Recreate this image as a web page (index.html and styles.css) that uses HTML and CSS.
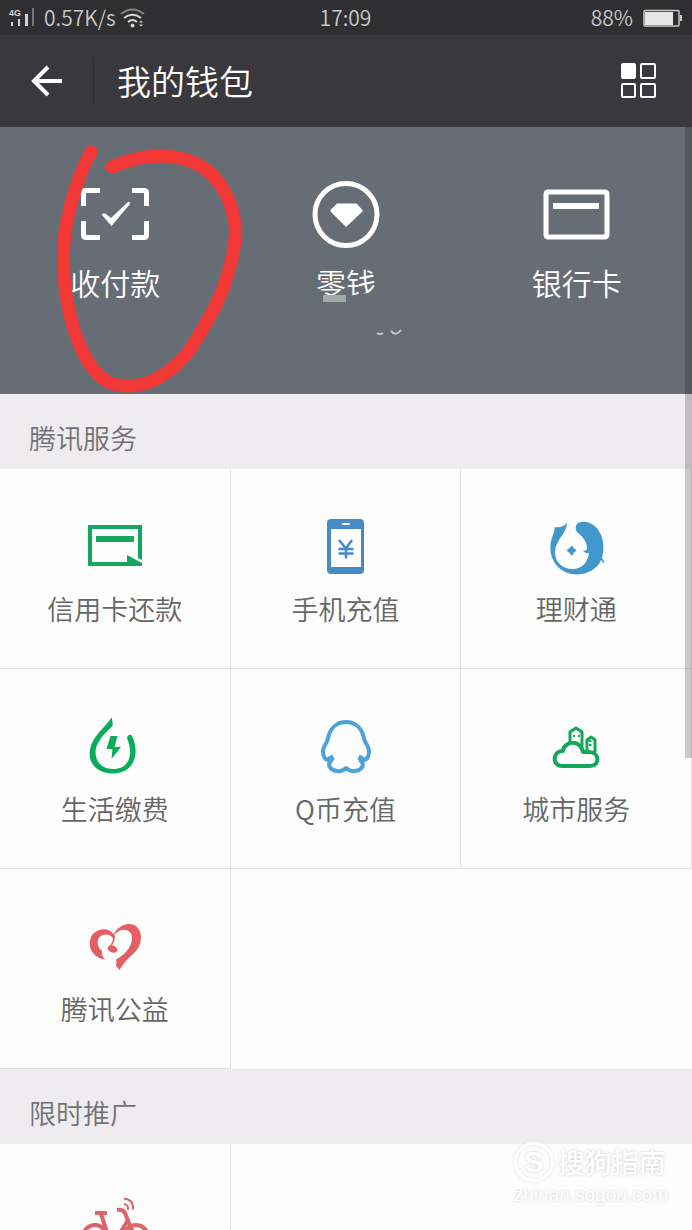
FILE: index.html
```html
<!DOCTYPE html>
<html lang="zh-CN">
<head>
<meta charset="utf-8">
<meta name="viewport" content="width=device-width, initial-scale=1">
<title>我的钱包</title>
<link rel="stylesheet" href="styles.css">
</head>
<body>
<div class="page">
  <div class="status">
    <div class="status-left">
      <svg class="signal" width="28" height="20" viewBox="8 8 28 20" aria-hidden="true">
        <text x="9" y="16" class="signal-text">4G</text>
        <g fill="#d4d4d4"><rect x="11" y="22" width="2" height="4"/><rect x="18" y="19" width="2" height="7"/><rect x="25" y="14" width="3" height="12"/></g>
        <rect x="32" y="8" width="2" height="18" fill="#777"/>
      </svg>
      <span class="speed">0.57K/s</span>
      <svg width="26" height="22" viewBox="119 6 26 22" fill="none" stroke-width="2" aria-hidden="true">
        <path d="M120 13q11.500-9 23 0" stroke="#858585"/>
        <path d="M123 17q8.500-6.500 17 0M127 21q4.500-4 9 0" stroke="#d4d4d4"/>
        <circle cx="131.500" cy="24.500" r="2" fill="#d4d4d4"/>
        <path d="M138 21.500l2-2 2 2zM138 23.500l2 2 2-2z" fill="#d4d4d4"/>
      </svg>
    </div>
    <span class="clock">17:09</span>
    <div class="status-right">
      <span>88%</span>
      <svg width="40" height="18" viewBox="643 8 40 18" aria-hidden="true">
        <rect x="644" y="9.500" width="35" height="15.500" rx="1" fill="none" stroke="#c9c9c9" stroke-width="1.500"/>
        <rect x="645" y="11" width="28" height="13" fill="#e6e6e6"/>
        <path d="M680 14h2v6h-2z" fill="#c9c9c9"/>
      </svg>
    </div>
  </div>

  <header class="header">
    <button class="icon-button back" type="button" aria-label="返回">
      <svg width="32" height="32" viewBox="31 65 32 32" fill="none" stroke="#fff" stroke-width="4"><path d="M62 81H34M48 67L34 81l14 14"/></svg>
    </button>
    <h1 class="title">我的钱包</h1>
    <button class="icon-button menu" type="button" aria-label="更多">
      <svg width="36" height="36" viewBox="620 63 36 36" fill="none" stroke="#fff" stroke-width="2">
        <rect x="622" y="64" width="13" height="14" rx="1" fill="#fff"/><rect x="641" y="64" width="14" height="14" rx="1"/><rect x="622" y="84" width="13" height="13" rx="1"/><rect x="641" y="84" width="14" height="13" rx="1"/>
      </svg>
    </button>
  </header>

  <main>
    <nav class="hero" aria-label="钱包">
      <a class="hero-item" href="#pay">
        <svg width="80" height="80" viewBox="75 174 80 80" fill="none" stroke="#fff" aria-hidden="true">
          <path stroke-width="5" d="M83.500 206v-13q0-2.500 2.500-2.500h14M132 190.500h12q2.500 0 2.500 2.500v13M146.500 221v14q0 2.500-2.500 2.500h-12M100 237.500H86q-2.500 0-2.500-2.500v-14"/>
          <path fill="#fff" stroke="none" d="M102 215q1-3 4-1l5 4 17-16q2-1 2 2l-18.500 22z"/>
        </svg>
        <span>收付款</span>
      </a>
      <a class="hero-item" href="#balance">
        <svg width="80" height="80" viewBox="306 174 80 80" aria-hidden="true">
          <circle cx="346" cy="214.500" r="31" fill="none" stroke="#fff" stroke-width="5"/>
          <path fill="#fff" d="M337 203.500h19.500l6 6.500v1.500l-16.500 15.500-15.500-15.500V210z"/>
        </svg>
        <span>零钱</span>
        <svg class="residue" width="92" height="48" viewBox="315 290 92 48" aria-hidden="true">
          <rect x="323" y="295" width="23" height="7" fill="#a3a9ad"/>
          <path d="M347 296l27-4 3-1v10h-30z" fill="#676d75"/>
          <path d="M377 333q3 2 6 0M391 331q5 6 10-1" fill="none" stroke="#c4c8cc" stroke-width="2"/>
        </svg>
      </a>
      <a class="hero-item" href="#cards">
        <svg width="80" height="80" viewBox="537 174 80 80" aria-hidden="true">
          <rect x="546" y="192" width="61" height="45" rx="2" fill="none" stroke="#fff" stroke-width="5"/>
          <path fill="#fff" d="M553 203h46v6h-46z"/>
        </svg>
        <span>银行卡</span>
      </a>
    </nav>

    <h2 class="section-title">腾讯服务</h2>
    <nav class="grid" aria-label="腾讯服务">
      <a class="cell" href="#credit">
        <svg width="72" height="64" viewBox="79 515 72 64" aria-hidden="true">
          <path fill="#15a75d" d="M88 525h54v35l-4-2v-29H92v33h35v-7l15 8v3H88z"/>
          <path fill="#15a75d" d="M96 536h38v6H96z"/>
        </svg>
        <span>信用卡还款</span>
      </a>
      <a class="cell" href="#mobile">
        <svg width="72" height="64" viewBox="309 515 72 64" aria-hidden="true">
          <rect x="327" y="519" width="37" height="55" rx="4" fill="#458cc6"/>
          <path fill="#fdfdfd" d="M331 529h30v38h-30z"/><rect x="342" y="523" width="8" height="2" rx="1" fill="#fff"/>
          <path d="M339 540l7 8.500 6-8.500M338.500 549h15M338.500 553.500h15M346 548v10.500" fill="none" stroke="#458cc6" stroke-width="2.500"/>
        </svg>
        <span>手机充值</span>
      </a>
      <a class="cell" href="#wealth">
        <svg width="72" height="64" viewBox="540 515 72 64" fill="#4098cf" aria-hidden="true">
          <path d="M567 522.500C564 527 560 527 554.500 527.500Q555 531 553 535C548 546 550 560 559 568C569 577 586 576 595 568C599 565 600 562 601 560L604.500 564Q604 560 602 558C604 550 604 542 601 535C597 526 590 521 581 522C575 523 574 529 578 533C584 538 587 542 587 549Q585 552 583 550Q585 554 589 553C588 562 582 569 573 569C562 569 555 562 555 552C555 540 567 534 567 522.500Z"/>
          <path d="M572 545.500l1.500 2.500 3 2.500-3 2.500-1.500 3-2.500-3-3-2.500 3-2.500z"/>
        </svg>
        <span>理财通</span>
      </a>
      <a class="cell" href="#utilities">
        <svg width="72" height="64" viewBox="79 715 72 64" aria-hidden="true">
          <path fill="#08ac5b" d="M111.500 717.500Q113 721 112.500 726C107 731 102 736 98 743C92 754 97 769 113 769C129 769 134 755 127 738Q128 734 131.500 735C140 751 136 773 113 773.500C91 773 85 756 93 741C98 732 106 726 111.500 717.500Z"/>
          <path fill="#08ac5b" d="M110.500 736h7l-3 11h6.500l-9.500 12 1-10h-6z"/>
        </svg>
        <span>生活缴费</span>
      </a>
      <a class="cell" href="#qcoin">
        <svg width="72" height="64" viewBox="309 715 72 64" fill="none" stroke="#4ca3d8" stroke-width="4" stroke-linejoin="round" aria-hidden="true">
          <path d="M333 757q-3 0-5 3-5-1-5-9c0-5 5-9 5-13 2-9 8-16 18-16s16 7 18 16c0 4 5 8 5 13q0 8-5 9-2-3-5-3"/>
          <path d="M333 757l-2 4c-4 4-1 9 6 10q5 1 9-3 5 4 9 3c7-1 10-6 6-10l-2-4"/>
        </svg>
        <span>Q币充值</span>
      </a>
      <a class="cell" href="#city">
        <svg width="72" height="64" viewBox="540 715 72 64" fill="none" stroke="#14a75c" stroke-width="4" stroke-linejoin="round" aria-hidden="true">
          <path d="M562 766c-10 0-10-15 1-15 1-10 17-12 20 1h6c11 0 11 14 1 14z"/>
          <path d="M570 744v-12l6-4 6 4v16M587 750v-10l4-3 4 3v12" stroke-width="3"/>
          <path d="M573 736h2m3 0h2M589 741h2.500M589 745h2.500" stroke-width="2"/>
        </svg>
        <span>城市服务</span>
      </a>
      <a class="cell" href="#charity">
        <svg width="72" height="64" viewBox="79 915 72 64" fill="#e45e64" aria-hidden="true">
          <path d="M115 936C111 928 100 927 94 933C86 941 89 957 105 959.500Q101 955 102 951C96 946 96 937 103 935Q109 933 113 938C113 942 111 944 109 946.500H111C114 943 115 940 115 936Z"/>
          <path d="M112 938C116 926 127 922 134 925C143 929 143 943 136 951C130 957 124 962 119.500 970L116 966Q117 963 116 959.500C124 955 132 948 132 938C132 928 119 926 112 938Z"/>
          <ellipse cx="112.500" cy="949" rx="5" ry="3.500" transform="rotate(20 112.500 949)"/>
        </svg>
        <span>腾讯公益</span>
      </a>
    </nav>

    <h2 class="section-title">限时推广</h2>
    <nav class="grid" aria-label="限时推广">
      <a class="cell cell-tall" href="#bike" aria-label="单车">
        <svg width="72" height="64" viewBox="79 1190 72 64" fill="none" stroke="#dc6469" stroke-width="4" aria-hidden="true">
          <circle cx="95" cy="1237" r="12"/><circle cx="136" cy="1237" r="12"/>
          <path d="M95 1213h12M101 1214l8 24M117 1210q6-1 8 3l10 25M128 1220l-11 18"/>
          <path d="M124 1198.500q10 1 9 11M124 1204q5 1 4 6" stroke-width="2"/>
        </svg>
      </a>
    </nav>
  </main>

  <svg class="scribble" width="200" height="260" viewBox="50 140 200 260" fill="none" stroke="#f23737" stroke-width="13" stroke-linecap="round" stroke-linejoin="round" aria-hidden="true">
    <path d="M91 152C82 167 70 200 65 232C61 265 65 300 74 330C83 357 95 378 113 384C142 391 167 378 189 351C203 329 216 307 222 291C231 265 237 246 235 223C230 192 214 169 188 160C160 152 136 156 112 167"/>
  </svg>
  <div class="scrollbar"></div>
  <div class="watermark">
    <div class="brand"><span class="brand-mark">S</span><span>搜狗指南</span></div>
    <div class="site">zhinan.sogou.com</div>
  </div>
</div>
</body>
</html>
```

FILE: styles.css
```css
* { box-sizing: border-box; }

body {
  margin: 0;
  font-family: "Noto Sans CJK SC", sans-serif;
  font-weight: 350;
  background: #fdfdfd;
}

.page {
  position: relative;
  height: 100vh;
  overflow: hidden;
}

svg { display: block; flex: none; }
a { color: inherit; text-decoration: none; }

.status {
  display: grid;
  grid-template-columns: 1fr auto 1fr;
  align-items: center;
  height: 35px;
  padding: 0 9px 0 8px;
  background: #2f2f31;
  color: #c8c8c8;
  font-size: 21px;
  line-height: 35px;
}

.status-left, .status-right { display: flex; align-items: center; }
.status-left { gap: 4px; }
.speed { margin-left: 4px; }
.status-right { justify-content: flex-end; gap: 10px; }

.signal-text {
  font: bold 9px "Liberation Sans", sans-serif;
  fill: #d4d4d4;
}

.header {
  display: flex;
  align-items: center;
  height: 92px;
  padding: 0 36px 0 31px;
  background: #39393d;
  color: #fff;
}

.icon-button {
  padding: 0;
  border: 0;
  background: none;
}

.back {
  padding: 8px 30px 8px 0;
  border-right: 1px solid #2f2f33;
}

.title {
  flex: 1;
  margin: 0 0 0 23px;
  font-size: 34px;
  font-weight: 350;
  line-height: 48px;
}

.hero {
  display: grid;
  grid-template-columns: repeat(3, 1fr);
  padding: 47px 0 92px;
  background: #676d75;
  color: #fff;
}

.hero-item {
  position: relative;
  display: flex;
  flex-direction: column;
  align-items: center;
  gap: 8px;
  font-size: 30px;
  line-height: 40px;
}

.residue {
  position: absolute;
  top: 116px;
  left: 84px;
}

.section-title {
  margin: 0;
  padding: 12px 29px 0;
  background: #eeecef;
  color: #727276;
  font-size: 27px;
  font-weight: 350;
  line-height: 63px;
}

.grid {
  display: grid;
  grid-template-columns: repeat(3, 1fr);
  background: #fdfdfd;
}

.cell {
  display: flex;
  flex-direction: column;
  align-items: center;
  gap: 10px;
  padding: 46px 0 39px;
  border-right: 1px solid #e2e2e2;
  border-bottom: 1px solid #e2e2e2;
  color: #666;
  font-size: 27px;
  line-height: 40px;
}

.cell-tall { min-height: 200px; }

.scribble {
  position: absolute;
  top: 140px;
  left: 50px;
}

.scrollbar {
  position: absolute;
  top: 127px;
  right: 0;
  width: 7px;
  height: 631px;
  background: rgba(0, 0, 0, 0.2);
}

.watermark {
  position: absolute;
  right: 24px;
  bottom: 22px;
  color: #fff;
  font-weight: 500;
  text-shadow: 0 0 3px #ccc;
}

.brand {
  display: flex;
  align-items: center;
  gap: 4px;
  font-size: 27px;
  line-height: 40px;
}

.brand-mark {
  width: 40px;
  height: 40px;
  border: 3px solid #fff;
  border-radius: 50%;
  box-shadow: 0 0 3px #ddd, inset 0 0 3px #ddd;
  font: bold 30px/34px "Liberation Sans", sans-serif;
  text-align: center;
}

.site {
  font: 19px/26px "Liberation Sans", sans-serif;
  text-align: right;
}
```
